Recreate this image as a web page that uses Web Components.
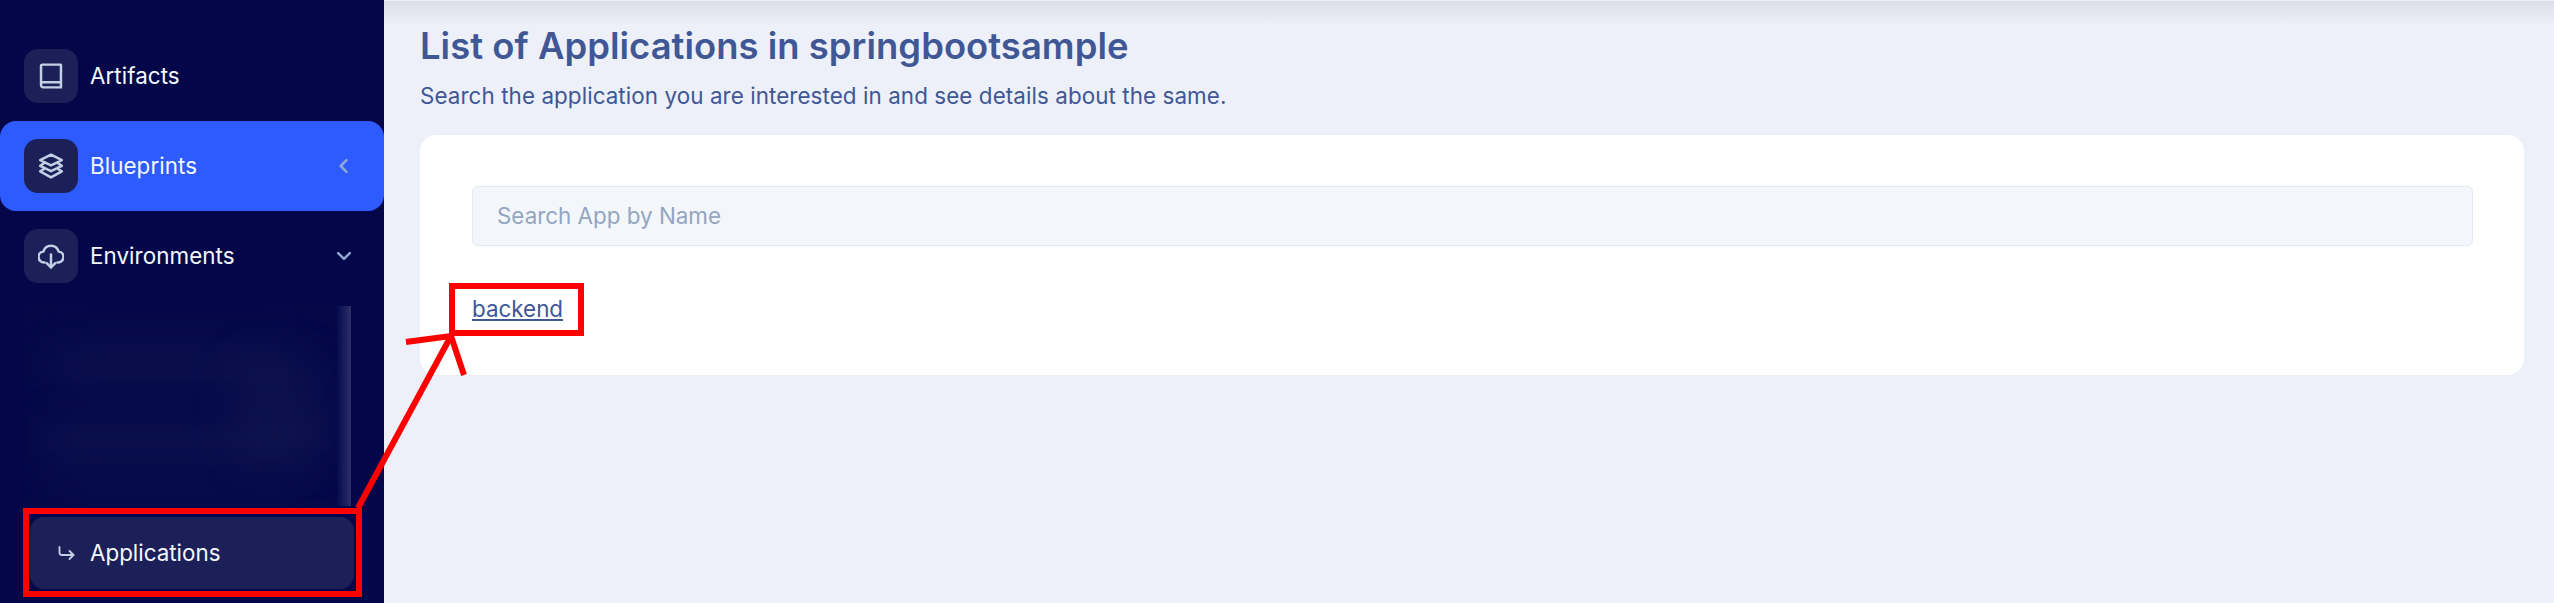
<!DOCTYPE html>
<html>
<head>
<meta charset="utf-8">
<title>Applications</title>
<style>
  html, body { margin: 0; height: 100%; overflow: hidden; }
  body { font-family: Inter, "Liberation Sans", sans-serif; background: #edf0f8; }
</style>
</head>
<body>
<app-shell>
  <side-nav slot="nav">
    <nav-item label="Artifacts" icon="book"></nav-item>
    <nav-item label="Blueprints" icon="layers" active chevron="left"></nav-item>
    <nav-item label="Environments" icon="cloud" chevron="down"></nav-item>
    <blur-list></blur-list>
    <sub-item label="Applications"></sub-item>
  </side-nav>
  <app-list slot="main" project="springbootsample">
    <a href="#">backend</a>
  </app-list>
  <red-marks slot="marks"></red-marks>
</app-shell>

<script>
const ICONS = {
  book: `<path d="M2.800 19.500V2.800c0-.7.600-1.300 1.300-1.300h16.800c.200 0 .300.100.300.300V22.500H4.800c-1.100 0-2-.9-2-2v-1zm0 0c0-1.100.9-1.800 2-1.800h16.400"/>`,
  layers: `<path d="M12 1.500 22 6.500 12 11.500 2 6.500z"/><path d="M5.500 9.500 2 11.800 12 16.800 22 11.800 18.500 9.500"/><path d="M5.500 14.800 2 17 12 22.500 22 17 18.500 14.800"/>`,
  cloud: `<path d="M6 18H5.500A5 5 0 0 1 .5 13a5 5 0 0 1 4.500-5.200A7.300 7.300 0 0 1 12 2.500a7.300 7.300 0 0 1 7 5.300A5 5 0 0 1 23.500 13a5 5 0 0 1-5 5H18"/><path d="M12 10.500v12"/><path d="M8 18.500 12 22.500 16 18.500"/>`,
  left: `<path d="M15 5 8 12l7 7"/>`,
  down: `<path d="m5 8.500 7 7 7-7"/>`
}

class AppShell extends HTMLElement {
  constructor() {
    super()
    this.attachShadow({ mode: 'open' }).innerHTML = `
      <style>
        :host { display: flex; position: relative; width: 2554px; height: 603px; overflow: hidden; background: #edf0f8; }
        .top { position: absolute; top: 1px; left: 384px; right: 0; height: 24px; background: linear-gradient(#dcdfe7, #edf0f800); pointer-events: none; }
      </style>
      <slot name="nav"></slot>
      <slot name="main"></slot>
      <div class="top"></div>
      <slot name="marks"></slot>
    `
  }
}

class SideNav extends HTMLElement {
  constructor() {
    super()
    this.attachShadow({ mode: 'open' }).innerHTML = `
      <style>
        :host { display: flex; flex-direction: column; flex: none; box-sizing: border-box; width: 384px; height: 603px; padding-top: 31px; background: #03074a; }
      </style>
      <slot></slot>
    `
  }
}

class NavItem extends HTMLElement {
  constructor() {
    super()
    const icon = ICONS[this.getAttribute('icon')]
    const chevron = ICONS[this.getAttribute('chevron')]
    this.attachShadow({ mode: 'open' }).innerHTML = `
      <style>
        :host { display: flex; align-items: center; flex: none; box-sizing: border-box; height: 90px; padding: 0 24px; gap: 12px; color: #f4f7fb; font-size: 22.400px; border-radius: 16px; }
        :host([active]) { background: #2e5bff; }
        .box { display: flex; align-items: center; justify-content: center; width: 54px; height: 54px; border-radius: 14px; background: #1b2059; }
        svg { fill: none; stroke: #c3d0e4; stroke-width: 2.300; stroke-linecap: round; stroke-linejoin: round; }
        .box svg { width: 26px; height: 26px; }
        .label { flex: 1; padding-bottom: 2px; letter-spacing: .06px; }
        .chev { width: 20px; height: 20px; stroke: #93a6d4; stroke-width: 3; margin-right: 6px; }
      </style>
      <span class="box"><svg viewBox="0 0 24 24">${icon}</svg></span>
      <span class="label">${this.getAttribute('label')}</span>
      ${chevron ? `<svg class="chev" viewBox="0 0 24 24">${chevron}</svg>` : ''}
    `
  }
}

// the part of the menu that was blurred out in the screenshot
class BlurList extends HTMLElement {
  constructor() {
    super()
    this.attachShadow({ mode: 'open' }).innerHTML = `
      <style>
        :host { display: block; flex: none; position: relative; overflow: hidden; height: 200px; margin: 5px 33px 0 26px; background: #040849; }
        .smear { position: absolute; background: #12184f; filter: blur(20px); opacity: .75; }
        .bar { position: absolute; top: 0; right: 0; bottom: 0; width: 14px; background: linear-gradient(90deg, #050a4e, #2b2f66); }
      </style>
      <div class="smear" style="left:30px;top:46px;width:240px;height:30px"></div>
      <div class="smear" style="left:20px;top:120px;width:270px;height:34px"></div>
      <div class="smear" style="left:210px;top:60px;width:90px;height:90px;opacity:.5"></div>
      <div class="smear" style="left:30px;top:186px;width:260px;height:20px;opacity:.5"></div>
      <div class="bar"></div>
    `
  }
}

class SubItem extends HTMLElement {
  constructor() {
    super()
    this.attachShadow({ mode: 'open' }).innerHTML = `
      <style>
        :host { display: flex; align-items: center; flex: none; box-sizing: border-box; height: 72px; margin: 11px 30px 0; padding-left: 28px; gap: 14px; background: #1b2059; border-radius: 14px; color: #f4f7fb; font-size: 22.400px; }
        svg { width: 18px; height: 18px; fill: none; stroke: #c3d0e4; stroke-width: 1.800; stroke-linecap: round; stroke-linejoin: round; }
        span { padding-bottom: 2px; }
      </style>
      <svg viewBox="0 0 18 18"><path d="M1.500 3v5.500c0 1.400 1 2.500 2.500 2.500h11.500"/><path d="m11.500 7 4 4-4 4"/></svg>
      <span>${this.getAttribute('label')}</span>
    `
  }
}

class AppList extends HTMLElement {
  constructor() {
    super()
    this.attachShadow({ mode: 'open' }).innerHTML = `
      <style>
        :host { display: block; flex: 1; box-sizing: border-box; padding: 22px 30px 0 36px; color: #405796; }
        h1 { margin: 0; font-size: 36.400px; line-height: 48px; font-weight: 600; letter-spacing: .04px; }
        p { margin: 10px 0 0; font-size: 22.400px; line-height: 32px; letter-spacing: .08px; }
        .card { box-sizing: border-box; height: 240px; margin-top: 23px; padding: 51px 51px 0 52px; background: #fff; border-radius: 16px; }
        .search { display: block; box-sizing: border-box; width: 100%; height: 60px; padding: 0 24px 2px; background: #f3f7fb; border: 1px solid #e4e8f2; border-radius: 6px; font: 22.400px Inter, "Liberation Sans", sans-serif; outline: none; }
        .search::placeholder { color: #93a5c1; opacity: 1; }
        .apps { margin-top: 48px; font-size: 22.400px; line-height: 30px; }
        ::slotted(a) { color: #405796; }
      </style>
      <h1>List of Applications in ${this.getAttribute('project')}</h1>
      <p>Search the application you are interested in and see details about the same.</p>
      <div class="card">
        <input class="search" placeholder="Search App by Name">
        <div class="apps"><slot></slot></div>
      </div>
    `
  }
}

// red annotations drawn over the screenshot
class RedMarks extends HTMLElement {
  constructor() {
    super()
    this.attachShadow({ mode: 'open' }).innerHTML = `
      <style>
        :host { display: block; position: absolute; inset: 0; pointer-events: none; }
        svg { display: block; width: 100%; height: 100%; fill: none; stroke: #fe0000; stroke-width: 6; }
      </style>
      <svg viewBox="0 0 2554 603">
        <rect x="26" y="511" width="333" height="83"/>
        <rect x="452" y="286" width="129" height="47"/>
        <path d="M358 508 451 336"/>
        <path d="M406 342 451 336"/>
        <path d="M451 336 464 375"/>
      </svg>
    `
  }
}

customElements.define('app-shell', AppShell)
customElements.define('side-nav', SideNav)
customElements.define('nav-item', NavItem)
customElements.define('blur-list', BlurList)
customElements.define('sub-item', SubItem)
customElements.define('app-list', AppList)
customElements.define('red-marks', RedMarks)
</script>
</body>
</html>
